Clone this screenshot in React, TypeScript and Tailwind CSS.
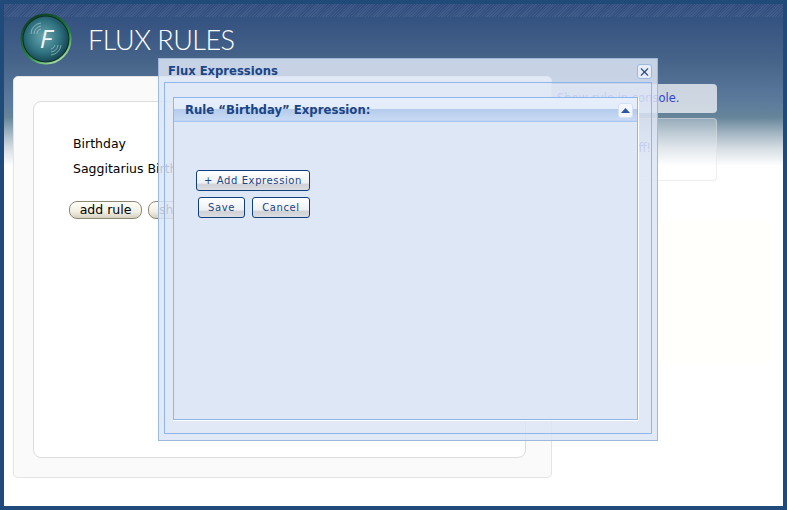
import { X } from "lucide-react"

const verdana = "font-['DejaVu_Sans',sans-serif]"

function Logo() {
  return (
    <svg width="54" height="54" viewBox="0 0 54 54">
      <defs>
        <radialGradient id="orb" cx="45%" cy="45%" r="60%">
          <stop offset="0%" stopColor="#6fa6b0" />
          <stop offset="60%" stopColor="#2f7280" />
          <stop offset="100%" stopColor="#123f4c" />
        </radialGradient>
        <linearGradient id="ring" x1="0.2" y1="0" x2="0.8" y2="1">
          <stop offset="0%" stopColor="#0c3a22" />
          <stop offset="60%" stopColor="#1d8a3c" />
          <stop offset="100%" stopColor="#b8e6b0" />
        </linearGradient>
      </defs>
      <path d="M4 27 A23 23 0 0 1 27 3" fill="none" stroke="#b9c3d1" strokeWidth="1.5" />
      <circle cx="27" cy="27" r="24.5" fill="#0d2f25" stroke="url(#ring)" strokeWidth="2" />
      <circle cx="27" cy="27" r="22.5" fill="url(#orb)" />
      <g fill="none" stroke="#cfe6ea" strokeOpacity="0.5" strokeWidth="1">
        <path d="M12 22 A11 11 0 0 1 22 11" />
        <path d="M15 22 A8 8 0 0 1 22 14" />
        <path d="M18 22 A5 5 0 0 1 22 17" />
        <path d="M42 33 A11 11 0 0 1 32 43" />
        <path d="M39 33 A8 8 0 0 1 32 40" />
        <path d="M36 33 A5 5 0 0 1 32 37" />
      </g>
      <text x="27" y="36" textAnchor="middle" fontSize="26" fontStyle="italic" fill="#eef6f6" fontFamily="Open Sans, sans-serif">F</text>
    </svg>
  )
}

function DialogButton({ label, className }: { label: string; className: string }) {
  return (
    <button className={`h-[21px] rounded-[3px] border-[1.5px] border-[#0f3f7c] bg-[linear-gradient(#ffffff_0%,#eef0f3_62%,#cfd1d6_72%,#dcdee1_100%)] text-[10px] tracking-[0.6px] text-[#1a4585] ${verdana} ${className}`}>
      {label}
    </button>
  )
}

export default function App() {
  return (
    <div className={`relative h-[510px] w-[787px] overflow-hidden border-4 border-[#204a7a] bg-white ${verdana}`}>
      <div className="absolute inset-x-0 top-0 h-[162px] bg-[linear-gradient(#2f4c7e_0%,#466489_35%,#5c7a9c_60%,#668599_70%,#a4b6c4_80%,#d5dde3_89%,#ffffff_100%)]" />
      <div className="absolute inset-x-0 top-0 h-[13px] bg-[repeating-linear-gradient(135deg,rgba(255,255,255,0.07)_0px,rgba(255,255,255,0.07)_1px,transparent_1px,transparent_2px)]" />

      <div className="relative flex h-[72px] items-start pl-[15px] pt-[8px]">
        <Logo />
        <div className="ml-[15px] mt-[10px] font-['Lato',sans-serif] text-[27px] font-light leading-[36px] tracking-[-0.5px] text-white">FLUX RULES</div>
      </div>

      <div className="relative ml-[9px] flex items-start">
        <div className="h-[402px] w-[539px] rounded-[5px] border border-[#e4e4e4] bg-[#fafafa] pl-[19px] pt-[24px]">
          <div className="h-[357px] w-[493px] rounded-lg border border-[#dcdcdc] bg-white pl-[39px] pt-[33px] text-[12.5px] text-black">
            <div className="leading-[18px]">Birthday</div>
            <div className="mt-[7px] leading-[18px]">Saggitarius Birthday</div>
            <div className="-ml-[4px] mt-[23px] flex gap-[6px]">
              <button className="h-[18px] w-[73px] rounded-lg border border-[#8d8875] bg-[linear-gradient(#fffef8,#f1efe4_60%,#d5d1c0)] text-[12.5px] leading-[16px]">add rule</button>
              <button className="h-[18px] w-[44px] rounded-l-lg border border-[#8d8875] bg-[linear-gradient(#fffef8,#f1efe4_60%,#d5d1c0)] pl-[10px] text-left text-[12.5px] leading-[16px]">show</button>
            </div>
          </div>
        </div>

        <div className="mt-[8px] flex flex-col">
          <div className="flex h-[29px] w-[165px] items-center rounded-r bg-white/70 pl-[5px] text-[11.5px] text-[#3344cc]">Show rule in console.</div>
          <div className="mt-[5px] flex h-[63px] w-[165px] items-start rounded-r border border-l-0 border-[#dddddd]/50 bg-white/30 pl-[40px] pt-[21px] text-[11.5px] text-[#3344cc]">Turn it off!</div>
          <div className="mt-[39px] h-[145px] w-[218px] bg-[#fffffb]" />
        </div>
      </div>

      <div className="absolute left-[154px] top-[54px] flex h-[383px] w-[500px] flex-col border border-[#a0b8dc] bg-[#dde5f5]/85">
        <div className="flex h-[23px] shrink-0 items-center justify-between pl-[9px] pr-[5px] pt-[2px]">
          <span className="text-[11.6px] font-bold text-[#1a4585]">Flux Expressions</span>
          <div className="flex size-[15px] items-center justify-center rounded-[3px] border border-[#9db8e0] bg-[#e6edf9]">
            <X size={14} strokeWidth={2} className="text-[#2d4a7c]" />
          </div>
        </div>
        <div className="mx-[5px] mb-[6px] flex-1 border border-[#8db6ee] pb-[13px] pl-[8px] pr-[13px] pt-[14px]">
          <div className="flex h-full flex-col border border-[#8db6ee] bg-[#dde7f6] shadow-[1px_0_0_#ffffff,0_1px_0_#ffffff]">
            <div className="flex h-[24px] shrink-0 items-center justify-between bg-[linear-gradient(#e6eefa_0%,#e3ecf9_45%,#b4cbec_46%,#c8daf3_92%,#9dc0f0_100%)] pl-[11px] pr-[4px]">
              <span className="mt-[1px] text-[11.7px] font-bold text-[#1a4585]">Rule “Birthday” Expression:</span>
              <div className="flex size-[15px] items-center justify-center rounded-[3px] border border-[#d5e2f5] bg-[#f3f7fd]">
                <svg width="9" height="5" viewBox="0 0 9 5"><path d="M4.5 0 L9 5 L0 5 Z" fill="#2a56a4" /></svg>
              </div>
            </div>
            <div className="flex w-[136px] flex-col items-end pl-[22px] pt-[48px]">
              <DialogButton label="+ Add Expression" className="w-[114px]" />
              <div className="mt-[6px] flex gap-[7px]">
                <DialogButton label="Save" className="w-[47px]" />
                <DialogButton label="Cancel" className="w-[58px]" />
              </div>
            </div>
          </div>
        </div>
      </div>
    </div>
  )
}
